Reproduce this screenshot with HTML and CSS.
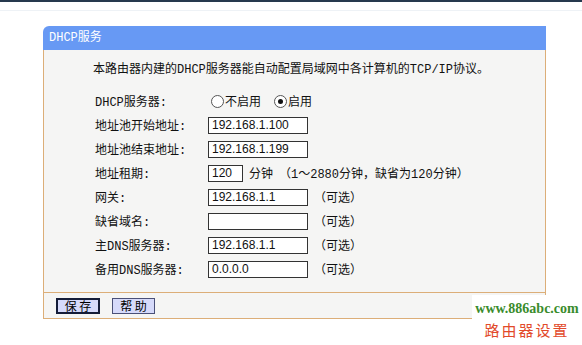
FILE: index.html
```html
<!DOCTYPE html>
<html lang="zh-CN">
<head>
<meta charset="utf-8">
<title>DHCP服务</title>
<link rel="stylesheet" href="styles.css">
</head>
<body>
<div class="topline"></div>
<div class="faintline"></div>
<div class="panel">
  <div class="header">DHCP服务</div>
  <div class="content">
    <div class="intro">本路由器内建的DHCP服务器能自动配置局域网中各计算机的TCP/IP协议。</div>
    <div class="form">
      <div class="label">DHCP服务器:</div>
      <div class="field"><span class="radio"></span><span class="opt">不启用</span><span class="radio checked"></span><span>启用</span></div>

      <div class="label">地址池开始地址:</div>
      <div class="field"><span class="input">192.168.1.100</span></div>

      <div class="label">地址池结束地址:</div>
      <div class="field"><span class="input">192.168.1.199</span></div>

      <div class="label">地址租期:</div>
      <div class="field"><span class="input short">120</span><span class="unit">分钟</span><span class="note">（1～2880分钟，缺省为120分钟）</span></div>

      <div class="label">网关:</div>
      <div class="field"><span class="input">192.168.1.1</span><span class="note">（可选）</span></div>

      <div class="label">缺省域名:</div>
      <div class="field"><span class="input"></span><span class="note">（可选）</span></div>

      <div class="label">主DNS服务器:</div>
      <div class="field"><span class="input">192.168.1.1</span><span class="note">（可选）</span></div>

      <div class="label">备用DNS服务器:</div>
      <div class="field"><span class="input">0.0.0.0</span><span class="note">（可选）</span></div>
    </div>
  </div>
  <div class="footer">
    <span class="btn primary">保 存</span>
    <span class="btn">帮 助</span>
  </div>
</div>
<div class="watermark">
  <div class="wm-url">www.886abc.com</div>
  <div class="wm-cn">路由器设置</div>
</div>
</body>
</html>
```

FILE: styles.css
```css
html, body {
  margin: 0;
  padding: 0;
  background: #ffffff;
}

body {
  width: 582px;
  height: 345px;
  position: relative;
  overflow: hidden;
  font-family: "Liberation Mono", "Noto Sans CJK SC", monospace;
  font-size: 12px;
  color: #111111;
}

.topline {
  height: 2px;
  background: #26394e;
}

.faintline {
  height: 1px;
  margin-top: 8px;
  background: #eef2f6;
}

.panel {
  margin: 15px 0 0 43px;
  width: 503px;
}

.header {
  height: 24px;
  line-height: 24px;
  padding-left: 6px;
  background: #6799f4;
  color: #ffffff;
  border-top-left-radius: 6px;
}

.content {
  background: #f5f5f4;
  border-left: 1px solid #dcae78;
  border-right: 1px solid #dcae78;
  padding: 10px 0 11px 0;
}

.intro {
  line-height: 20px;
  padding-left: 49px;
}

.form {
  margin-top: 9px;
  padding-left: 51px;
  display: grid;
  grid-template-columns: 113px 1fr;
  grid-auto-rows: 24px;
  align-items: center;
}

.field {
  display: flex;
  align-items: center;
}

.radio {
  width: 11px;
  height: 11px;
  border: 1px solid #555555;
  border-radius: 50%;
  background: #ffffff;
  margin: 0 1px 0 3px;
  position: relative;
  box-sizing: content-box;
}

.radio.checked::after {
  content: "";
  position: absolute;
  left: 3px;
  top: 3px;
  width: 5px;
  height: 5px;
  border-radius: 50%;
  background: #111111;
}

.opt {
  margin-right: 10px;
}

.input {
  box-sizing: border-box;
  width: 100px;
  height: 17px;
  border: 1px solid #333333;
  background: #ffffff;
  font-family: "Liberation Sans", sans-serif;
  font-size: 12px;
  line-height: 15px;
  padding-left: 3px;
}

.input.short {
  width: 35px;
}

.unit {
  margin-left: 6px;
}

.note {
  margin-left: 6px;
}

.footer {
  height: 25px;
  background: #f5f5f4;
  border: 1px solid #dcae78;
  display: flex;
  align-items: flex-start;
  gap: 12px;
  padding: 5px 0 0 12px;
  box-sizing: border-box;
  height: 27px;
}

.btn {
  box-sizing: border-box;
  height: 16px;
  width: 43px;
  line-height: 14px;
  text-align: center;
  background: #d6dafa;
  border: 1px solid #4a5078;
  font-family: "Noto Sans CJK SC", sans-serif;
  font-size: 12px;
  color: #000000;
}

.btn.primary {
  width: 44px;
  border: 2px solid #141c38;
  line-height: 12px;
}

.watermark {
  position: absolute;
  left: 472px;
  top: 295px;
  width: 110px;
  height: 50px;
  background: #ffffff;
  text-align: center;
}

.wm-url {
  font-family: "Liberation Serif", serif;
  font-weight: bold;
  font-size: 14px;
  line-height: 18px;
  margin-top: 5px;
  color: #3a8c2c;
}

.wm-cn {
  font-family: "Noto Sans CJK SC", sans-serif;
  font-size: 15px;
  line-height: 20px;
  letter-spacing: 2px;
  color: #e24a2a;
  margin-top: 2px;
}
```
